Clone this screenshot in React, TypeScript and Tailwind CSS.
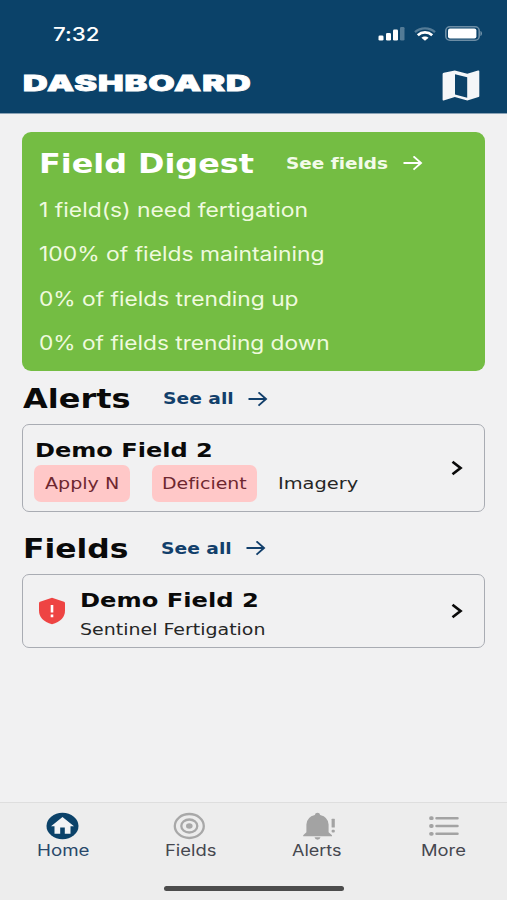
import { useLayoutEffect, useRef, useState } from "react";
import type { ReactNode } from "react";

function FitText({ children, className = "" }: { children: ReactNode; className?: string }) {
  const box = useRef<HTMLSpanElement>(null);
  const text = useRef<HTMLSpanElement>(null);
  const [scale, setScale] = useState(1);

  useLayoutEffect(() => {
    if (!box.current || !text.current) return;
    setScale(box.current.clientWidth / text.current.offsetWidth);
  }, [children]);

  return (
    <span ref={box} className={`block shrink-0 whitespace-nowrap ${className}`}>
      <span ref={text} className="inline-block origin-left" style={{ transform: `scaleX(${scale})` }}>
        {children}
      </span>
    </span>
  );
}

function ArrowIcon({ className = "" }: { className?: string }) {
  return (
    <svg className={`h-[16px] w-[20px] shrink-0 ${className}`} viewBox="0 0 20 16" fill="none" stroke="currentColor" strokeWidth="1.9">
      <path d="M.5 7h17.500M10.500 .4 18 7l-7.500 6.600" />
    </svg>
  );
}

function ChevronIcon() {
  return (
    <svg className="h-[16px] w-[12px] shrink-0" viewBox="0 0 12 16" fill="none" stroke="#0a0a0a" strokeWidth="2.700">
      <path d="M1.500 1.800 9.500 8l-8 6.200" />
    </svg>
  );
}

function SignalIcon() {
  return (
    <svg className="h-[14px] w-[27px]" viewBox="0 0 27 14" fill="#fff">
      <rect x="0.500" y="8.500" width="5" height="5" rx="1.300" />
      <rect x="8" y="6" width="5" height="7.500" rx="1.300" />
      <rect x="15" y="2.500" width="5" height="11" rx="1.300" />
      <rect x="22" y="0" width="4.500" height="13.500" rx="1.300" opacity="0.3" />
    </svg>
  );
}

function WifiIcon() {
  return (
    <svg className="h-[14px] w-[22px]" viewBox="0 0 22 14" fill="none" stroke="#fff" strokeWidth="2.300">
      <path d="M1 5.200C6.500 0 15.500 0 21 5.200" opacity="0.3" />
      <path d="M3.800 8.200c4.200-3.800 10.200-3.800 14.400 0" strokeWidth="2.800" />
      <path d="M7.400 10.800c2-1.900 5.200-1.900 7.200 0L11 13.800z" fill="#fff" stroke="none" />
    </svg>
  );
}

function BatteryIcon() {
  return (
    <svg className="h-[15px] w-[38px]" viewBox="0 0 38 15">
      <rect x="0.800" y="0.800" width="33.400" height="13.400" rx="4" fill="none" stroke="#fff" strokeWidth="1.600" opacity="0.4" />
      <rect x="3" y="2.600" width="28.400" height="9.800" rx="2" fill="#fff" />
      <path d="M35.500 5c1.800.6 1.800 4.400 0 5z" fill="#fff" opacity="0.5" />
    </svg>
  );
}

function MapIcon() {
  return (
    <svg className="h-[31px] w-[38px]" viewBox="0 0 38 31">
      <path
        d="M1.800 2.700 12.800.5l12.500 3.300L36 .5q1.300-.4 1.300.8v24.700q0 .8-.8 1L25.300 30.500 12.800 27 1.600 30.400q-1 .3-1-.7V4q0-1 1.200-1.300zM13 4.200v20.300l12.200 3.300V7.200z"
        fill="#f4f6f8"
        fillRule="evenodd"
      />
    </svg>
  );
}

function ShieldIcon() {
  return (
    <svg className="h-[28px] w-[28px] shrink-0" viewBox="0 0 28 28">
      <path d="M14 .8 26 4.800q1 .4 1 1.400V13.500Q27 23.500 14 27.200 1 23.500 1 13.500V6.200q0-1 1-1.400z" fill="#ee4443" />
      <path d="M14 8v7.500M14 17.500v2.700" stroke="#fff" strokeWidth="2.600" />
    </svg>
  );
}

function HomeIcon() {
  return (
    <svg className="h-[28px] w-[34px]" viewBox="0 0 34 28">
      <ellipse cx="16.500" cy="14" rx="16" ry="13.200" fill="#0b4269" />
      <path d="M16.500 5 28 14.300h-3.500v7.500h-5.700v-6.300h-4.600v6.300H8.500v-7.500H5z" fill="#f1f3f5" />
    </svg>
  );
}

function TargetIcon() {
  return (
    <svg className="h-[28px] w-[34px]" viewBox="0 0 34 28" fill="none" stroke="#a8a8a8" strokeWidth="2.300">
      <ellipse cx="16.300" cy="14" rx="14.500" ry="12" />
      <ellipse cx="16.300" cy="14" rx="8" ry="6.500" />
      <ellipse cx="16.300" cy="14" rx="3.300" ry="2.700" fill="#a8a8a8" stroke="none" />
    </svg>
  );
}

function BellIcon() {
  return (
    <svg className="h-[28px] w-[36px]" viewBox="0 0 36 28" fill="#a3a3a3">
      <path d="M18.500.7q2.300 0 2.700 2.300 8 2 8.400 9.500v7.800l3.400 3v1H4.200v-1l3.200-3v-7.800q.4-7.500 8.400-9.500.4-2.300 2.700-2.300z" />
      <path d="M15.500 25.300h6q-.5 2.400-3 2.400t-3-2.400z" />
      <rect x="32.600" y="6.800" width="3.200" height="8.700" rx="0.500" />
      <rect x="32.600" y="17.700" width="3.200" height="2.900" rx="1" />
    </svg>
  );
}

function ListIcon() {
  return (
    <svg className="h-[28px] w-[34px]" viewBox="0 0 34 28" fill="none" stroke="#a3a3a3" strokeWidth="2.500">
      <path d="M9.500 6.200h21M9.500 14h21M9.500 21.800h21" strokeLinecap="round" />
      <path d="M4 6.200h.8M4 14h.8M4 21.800h.8" strokeWidth="3.800" strokeLinecap="round" />
    </svg>
  );
}

const digest = [
  { text: "1 field(s) need fertigation", width: "w-[269px]" },
  { text: "100% of fields maintaining", width: "w-[285px]" },
  { text: "0% of fields trending up", width: "w-[259px]" },
  { text: "0% of fields trending down", width: "w-[291px]" },
];

const tabs = [
  { label: "Home", icon: <HomeIcon />, width: "w-[52px]", color: "text-[#29486a]" },
  { label: "Fields", icon: <TargetIcon />, width: "w-[51px]", color: "text-[#45474f]" },
  { label: "Alerts", icon: <BellIcon />, width: "w-[50px]", color: "text-[#45474f]" },
  { label: "More", icon: <ListIcon />, width: "w-[45px]", color: "text-[#45474f]" },
];

function SectionHeader({ title, titleWidth, className }: { title: string; titleWidth: string; className: string }) {
  return (
    <div className={`flex items-center pl-px text-[#0a0a0a] ${className}`}>
      <FitText className={`text-[26px] font-bold ${titleWidth}`}>{title}</FitText>
      <div className="ml-[33px] flex items-center text-[#123f6b]">
        <FitText className="w-[71px] text-[15px] font-bold">See all</FitText>
        <ArrowIcon className="ml-[14px]" />
      </div>
    </div>
  );
}

export default function App() {
  return (
    <div className="flex h-[900px] w-[507px] flex-col overflow-hidden bg-[#f1f1f2] font-['DejaVu_Sans',sans-serif] [font-variant-ligatures:none]">
      <header className="h-[113.500px] shrink-0 border-b border-[#8ba3b6] bg-[#0b4269] text-white">
        <div className="flex h-[54px] items-center pt-[13px] pr-[24px] pl-[53px]">
          <FitText className="w-[47px] pt-[3px] font-['Inter',sans-serif] text-[19px] font-medium">7:32</FitText>
          <div className="ml-auto flex items-center">
            <SignalIcon />
            <div className="ml-[9px]">
              <WifiIcon />
            </div>
            <div className="ml-[9px]">
              <BatteryIcon />
            </div>
          </div>
        </div>
        <div className="flex h-[58px] items-center justify-between pr-[27px] pl-[23px]">
          <FitText className="w-[229px] font-['Inter',sans-serif] text-[21.500px] leading-[58px] font-black tracking-[0.600px] [-webkit-text-stroke:0.8px_white]">
            DASHBOARD
          </FitText>
          <div className="pt-[4px]">
            <MapIcon />
          </div>
        </div>
      </header>

      <main className="flex-1 px-[22px] pt-[18px]">
        <section className="h-[239px] rounded-[9px] bg-[#74bd43] pt-[9px] pl-[16px] text-white">
          <div className="flex h-[47.500px] items-center">
            <FitText className="ml-px w-[215px] text-[26.500px] font-bold">Field Digest</FitText>
            <FitText className="ml-[32px] w-[102px] text-[15px] font-bold text-[#f3fbe9]">See fields</FitText>
            <ArrowIcon className="ml-[15px]" />
          </div>
          {digest.map((line) => (
            <FitText
              key={line.text}
              className={`ml-px h-[44.300px] font-['Inter',sans-serif] text-[19.500px] leading-[44px] text-[#effade] ${line.width}`}
            >
              {line.text}
            </FitText>
          ))}
        </section>

        <SectionHeader title="Alerts" titleWidth="w-[107px]" className="h-[53px] pt-[5px]" />
        <section className="flex h-[88px] items-center rounded-[7px] border border-[#a9acb3] pr-[21px] pl-[11px]">
          <div className="h-full pt-[11px]">
            <FitText className="ml-px h-[29px] w-[178px] text-[20px] leading-[29px] font-bold text-[#0a0a0a]">Demo Field 2</FitText>
            <div className="flex items-center text-[16px] leading-[38px]">
              <div className="flex h-[37px] w-[96px] justify-center rounded-[7px] bg-[#ffc8c8] text-[#6e2730]">
                <FitText className="w-[74px]">Apply N</FitText>
              </div>
              <div className="ml-[22px] flex h-[37px] w-[105px] justify-center rounded-[7px] bg-[#ffc8c8] text-[#6e2730]">
                <FitText className="w-[85px]">Deficient</FitText>
              </div>
              <FitText className="ml-[21px] h-[37px] w-[80px] text-[#262626]">Imagery</FitText>
            </div>
          </div>
          <div className="ml-auto">
            <ChevronIcon />
          </div>
        </section>

        <SectionHeader title="Fields" titleWidth="w-[105px]" className="h-[62px] pt-[13px]" />
        <section className="flex h-[74.500px] items-center rounded-[7px] border border-[#a9acb3] pr-[21px] pl-[15px]">
          <ShieldIcon />
          <div className="ml-[14px] h-full pt-[11px]">
            <FitText className="h-[30px] w-[179px] text-[20px] leading-[29px] font-bold text-[#0a0a0a]">Demo Field 2</FitText>
            <FitText className="h-[27px] w-[186px] text-[15.500px] leading-[29px] text-[#262626]">Sentinel Fertigation</FitText>
          </div>
          <div className="ml-auto">
            <ChevronIcon />
          </div>
        </section>
      </main>

      <nav className="flex h-[98px] shrink-0 flex-col border-t border-[#dedede] bg-[#ededed]">
        <div className="flex pt-[9px]">
          {tabs.map((tab) => (
            <div key={tab.label} className="flex flex-1 flex-col items-center">
              {tab.icon}
              <FitText className={`font-['Inter',sans-serif] text-[15.500px] leading-[22px] ${tab.width} ${tab.color}`}>
                {tab.label}
              </FitText>
            </div>
          ))}
        </div>
        <div className="mx-auto mt-[23.500px] h-[5.500px] w-[180px] rounded-full bg-[#4c4c4c]" />
      </nav>
    </div>
  );
}
